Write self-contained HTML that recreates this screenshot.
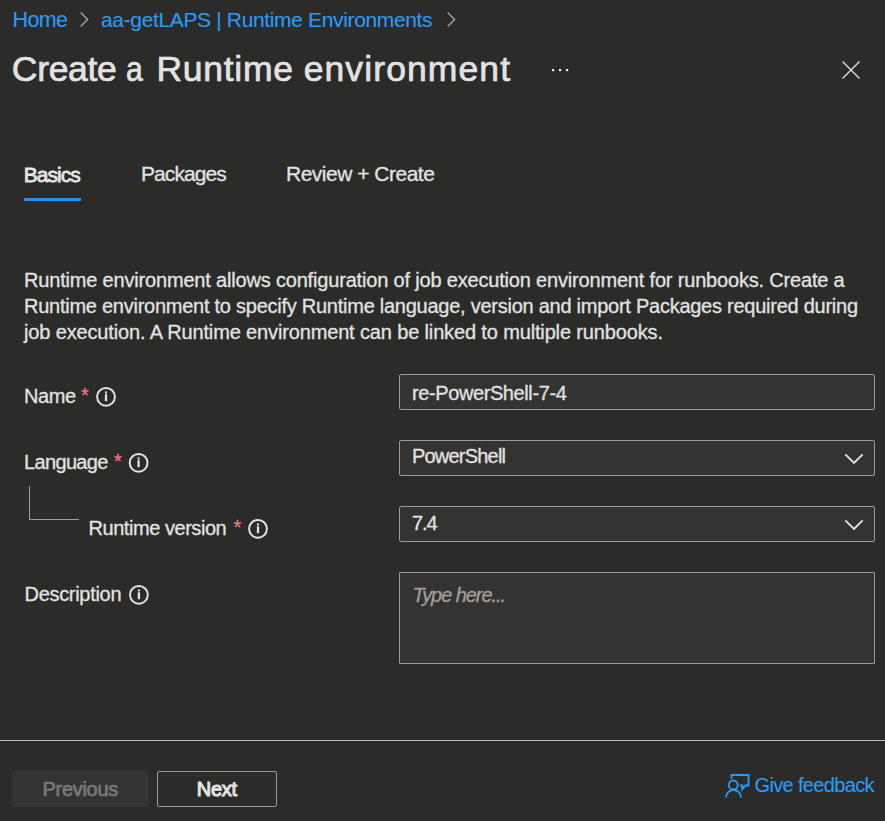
<!DOCTYPE html>
<html><head><meta charset="utf-8">
<style>
html,body{margin:0;padding:0;}
body{width:885px;height:821px;overflow:hidden;background:#2b2b2a;position:relative;font-family:"Liberation Sans",sans-serif;color:#e2e2e2;}
.t{position:absolute;white-space:nowrap;line-height:1;-webkit-text-stroke-width:0.3px;}
.lnk{color:#2a9cf8;}
.box{position:absolute;left:399px;width:474px;background:#343332;border:1px solid #9d9b99;border-radius:2px;}
svg{position:absolute;overflow:visible;}
.ttl{top:51.6px;font-size:35.5px;-webkit-text-stroke:0.7px #e6e6e6;}
</style></head><body>
<!-- breadcrumb -->
<div class="t lnk" style="-webkit-text-stroke-width:0.1px;left:12.5px;top:10px;font-size:21.5px;letter-spacing:-0.6px;">Home</div>
<svg style="left:0;top:0" width="885" height="40"><path d="M80.6 12.6 L87.6 19.5 L80.6 26.4" fill="none" stroke="#a0a0a0" stroke-width="1.45"/></svg>
<div class="t lnk" style="-webkit-text-stroke-width:0.1px;left:101px;top:8.7px;font-size:21px;letter-spacing:-0.35px;">aa-getLAPS | Runtime Environments</div>
<svg style="left:0;top:0" width="885" height="40"><path d="M447.6 12.6 L454.6 19.5 L447.6 26.4" fill="none" stroke="#a0a0a0" stroke-width="1.45"/></svg>
<!-- title -->
<div class="t ttl" style="left:11.8px;letter-spacing:-0.3px;">Create</div>
<div class="t ttl" style="left:126px;transform:scaleX(0.85);transform-origin:0 0;">a</div>
<div class="t ttl" style="left:156.5px;letter-spacing:0.72px;">Runtime</div>
<div class="t ttl" style="left:303.7px;letter-spacing:1.1px;">environment</div>
<svg style="left:0;top:0" width="885" height="100">
<rect x="552" y="69" width="2.2" height="2.2" fill="#f0f0f0"/><rect x="559" y="69" width="2.2" height="2.2" fill="#f0f0f0"/><rect x="566" y="69" width="2.2" height="2.2" fill="#f0f0f0"/>
<path d="M842.5 61.5 L859.5 78.5 M859.5 61.5 L842.5 78.5" stroke="#e0e0e0" stroke-width="1.4" fill="none"/>
</svg>
<!-- tabs -->
<div class="t" style="left:23.8px;top:163.5px;font-size:21px;-webkit-text-stroke:0.8px #e6e6e6;letter-spacing:-1.0px;">Basics</div>
<div style="position:absolute;left:24px;top:198px;width:57px;height:3px;background:#2b8fe6;"></div>
<div class="t" style="left:141px;top:162.5px;font-size:21px;letter-spacing:-0.93px;">Packages</div>
<div class="t" style="left:286px;top:162.5px;font-size:21px;letter-spacing:-0.5px;">Review + Create</div>
<!-- paragraph -->
<div class="t" style="left:24px;top:266.5px;font-size:20px;line-height:26px;letter-spacing:-0.18px;">Runtime environment allows configuration of job execution environment for runbooks. Create a<br><span style="letter-spacing:-0.254px">Runtime environment to specify Runtime language, version and import Packages required during</span><br><span style="letter-spacing:-0.145px">job execution. A Runtime environment can be linked to multiple runbooks.</span></div>
<!-- labels -->
<div class="t" style="left:24px;top:385.5px;font-size:20px;letter-spacing:-0.4px;">Name</div>
<div class="t" style="left:81px;top:385px;font-size:20px;color:#eb7886;">*</div>
<div class="t" style="left:24px;top:452px;font-size:20px;letter-spacing:-0.65px;">Language</div>
<div class="t" style="left:114px;top:450.7px;font-size:20px;color:#eb7886;">*</div>
<div style="position:absolute;left:29px;top:486px;width:49px;height:33px;border-left:1px solid #a0a0a0;border-bottom:1px solid #a0a0a0;"></div>
<div class="t" style="left:88.5px;top:518px;font-size:20px;letter-spacing:-0.45px;">Runtime version</div>
<div class="t" style="left:233.5px;top:516.7px;font-size:20px;color:#eb7886;">*</div>
<div class="t" style="left:24.5px;top:584px;font-size:20px;letter-spacing:-0.3px;">Description</div>
<svg style="left:0;top:0" width="885" height="700" fill="none" stroke="#e2e2e2">
<g stroke-width="2">
<circle cx="106" cy="396.8" r="8.9"/>
<circle cx="138.6" cy="462.8" r="8.9"/>
<circle cx="258" cy="528.8" r="8.9"/>
<circle cx="138.9" cy="594.8" r="8.9"/>
</g><g stroke-width="2.3">
<path d="M106 394.2 V401.2"/>
<path d="M138.6 460.2 V467.2"/>
<path d="M258 526.2 V533.2"/>
<path d="M138.9 592.2 V599.2"/>
</g><g fill="#e2e2e2" stroke="none">
<circle cx="106" cy="392.5" r="1.15"/>
<circle cx="138.6" cy="458.5" r="1.15"/>
<circle cx="258" cy="524.5" r="1.15"/>
<circle cx="138.9" cy="590.5" r="1.15"/>
</g></svg>
<!-- inputs -->
<div class="box" style="top:374px;height:34px;"></div>
<div class="box" style="top:440px;height:34px;"></div>
<div class="box" style="top:506px;height:34px;"></div>
<div class="box" style="top:572px;height:90px;border-radius:1px;"></div>
<div class="t" style="left:412px;top:382.8px;font-size:20px;letter-spacing:-0.4px;">re-PowerShell-7-4</div>
<div class="t" style="left:412px;top:446px;font-size:20px;letter-spacing:-0.8px;">PowerShell</div>
<div class="t" style="left:412px;top:512.5px;font-size:20px;letter-spacing:-1.1px;">7.4</div>
<div class="t" style="left:412.5px;top:584.5px;font-size:20px;font-style:italic;color:#a19f9d;letter-spacing:-1.07px;">Type here...</div>
<svg style="left:0;top:0" width="885" height="700" fill="none" stroke="#e2e2e2" stroke-width="1.85">
<path d="M845.3 454.3 L854 463 L862.7 454.3"/>
<path d="M845.3 520.3 L854 529 L862.7 520.3"/>
</svg>
<!-- footer -->
<div style="position:absolute;left:0;top:740px;width:885px;height:1px;background:#bdbdbd;"></div>
<div style="position:absolute;left:12px;top:771px;width:137px;height:36px;background:#353433;border-radius:2px;"></div>
<div class="t" style="left:42.5px;top:778.5px;font-size:20px;color:#7a7978;-webkit-text-stroke:0.7px #7a7978;letter-spacing:-0.3px;">Previous</div>
<div style="position:absolute;left:157px;top:771px;width:118px;height:34px;border:1px solid #9a9896;border-radius:2px;"></div>
<div class="t" style="left:196.8px;top:779px;font-size:20px;-webkit-text-stroke:1.1px #e2e2e2;letter-spacing:-0.3px;">Next</div>
<svg style="left:0;top:0" width="885" height="821" fill="none" stroke="#2a9cf8" stroke-width="1.9">
<path d="M731.5 778.8 V775 H748.5 V785.5 H745.5 L742.3 789.2 V785.5 H739.8" stroke-linejoin="miter"/>
<circle cx="733.3" cy="785" r="4.5"/>
<path d="M726 797.5 A7.5 7.5 0 0 1 741 797.5"/>
</svg>
<div class="t lnk" style="-webkit-text-stroke-width:0.1px;left:754.5px;top:774.5px;font-size:20px;letter-spacing:-0.65px;">Give feedback</div>
</body></html>
